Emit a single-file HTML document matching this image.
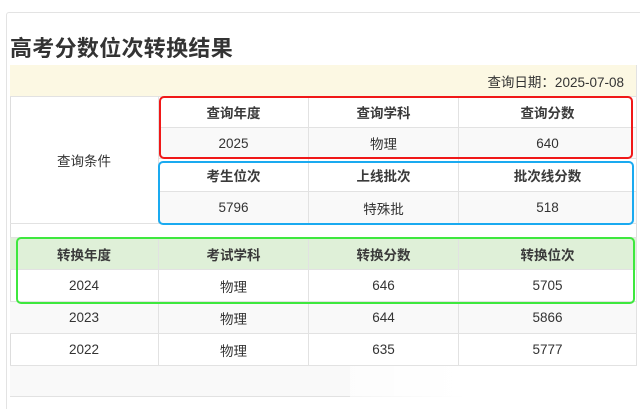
<!DOCTYPE html>
<html><head><meta charset="utf-8"><style>
*{margin:0;padding:0;box-sizing:border-box}
html,body{width:640px;height:409px;overflow:hidden}
body{background:#fff;position:relative;font-family:"Liberation Sans","Noto Sans CJK SC",sans-serif;color:#333}
.card{position:absolute;left:6px;top:12px;width:640px;height:400px;border:1px solid #e3e3e3;border-radius:3px}
h1{position:absolute;left:10px;top:31px;font-size:22px;font-weight:bold;color:#333;letter-spacing:0.3px}
.c{position:absolute;font-size:13.5px;display:flex;align-items:center;justify-content:center;border-right:1px solid #e2e2e2;border-bottom:1px solid #e2e2e2}
.b{font-weight:bold;color:#3a3a3a}
.box{position:absolute;border:2px solid;border-radius:5px}
</style></head><body>
<div class="card"></div>
<h1>高考分数位次转换结果</h1>
<div style="position:absolute;left:10px;top:65px;width:627px;height:332px;border:1px solid #ddd;background:#fff"></div>
<div class="c" style="left:10px;top:65px;width:627px;height:32px;background:#fcf8e3;justify-content:flex-end;padding-right:12px">查询日期：2025-07-08</div>
<div class="c" style="left:10px;top:97px;width:149px;height:127px">查询条件</div>
<div class="c b" style="left:159px;top:97px;width:150px;height:31px">查询年度</div>
<div class="c b" style="left:309px;top:97px;width:150px;height:31px">查询学科</div>
<div class="c b" style="left:459px;top:97px;width:178px;height:31px">查询分数</div>
<div class="c" style="left:159px;top:128px;width:150px;height:31px;background:#f9f9f9">2025</div>
<div class="c" style="left:309px;top:128px;width:150px;height:31px;background:#f9f9f9">物理</div>
<div class="c" style="left:459px;top:128px;width:178px;height:31px;background:#f9f9f9">640</div>
<div class="c b" style="left:159px;top:159px;width:150px;height:33px">考生位次</div>
<div class="c b" style="left:309px;top:159px;width:150px;height:33px">上线批次</div>
<div class="c b" style="left:459px;top:159px;width:178px;height:33px">批次线分数</div>
<div class="c" style="left:159px;top:192px;width:150px;height:32px;background:#f9f9f9">5796</div>
<div class="c" style="left:309px;top:192px;width:150px;height:32px;background:#f9f9f9">特殊批</div>
<div class="c" style="left:459px;top:192px;width:178px;height:32px;background:#f9f9f9">518</div>
<div class="c" style="left:10px;top:224px;width:627px;height:14px;border-right:none"></div>
<div class="c b" style="left:10px;top:238px;width:149px;height:32px;background:#dff0d8">转换年度</div>
<div class="c b" style="left:159px;top:238px;width:150px;height:32px;background:#dff0d8">考试学科</div>
<div class="c b" style="left:309px;top:238px;width:150px;height:32px;background:#dff0d8">转换分数</div>
<div class="c b" style="left:459px;top:238px;width:178px;height:32px;background:#dff0d8">转换位次</div>
<div class="c" style="left:10px;top:270px;width:149px;height:32px">2024</div>
<div class="c" style="left:159px;top:270px;width:150px;height:32px">物理</div>
<div class="c" style="left:309px;top:270px;width:150px;height:32px">646</div>
<div class="c" style="left:459px;top:270px;width:178px;height:32px">5705</div>
<div class="c" style="left:10px;top:302px;width:149px;height:32px;background:#f9f9f9">2023</div>
<div class="c" style="left:159px;top:302px;width:150px;height:32px;background:#f9f9f9">物理</div>
<div class="c" style="left:309px;top:302px;width:150px;height:32px;background:#f9f9f9">644</div>
<div class="c" style="left:459px;top:302px;width:178px;height:32px;background:#f9f9f9">5866</div>
<div class="c" style="left:10px;top:334px;width:149px;height:32px">2022</div>
<div class="c" style="left:159px;top:334px;width:150px;height:32px">物理</div>
<div class="c" style="left:309px;top:334px;width:150px;height:32px">635</div>
<div class="c" style="left:459px;top:334px;width:178px;height:32px">5777</div>
<div class="c" style="left:10px;top:366px;width:627px;height:31px;background:#f9f9f9"></div>
<div style="position:absolute;left:350px;top:366px;width:290px;height:43px;background:linear-gradient(90deg,rgba(255,255,255,0.6),#fff 40%)"></div>
<div class="box" style="left:159px;top:96px;width:474px;height:63px;border-color:#f01818"></div>
<div class="box" style="left:158px;top:161px;width:476px;height:64px;border-color:#1aaaf0"></div>
<div class="box" style="left:16px;top:237px;width:619px;height:67px;border-color:#3ee83e"></div>
</body></html>
